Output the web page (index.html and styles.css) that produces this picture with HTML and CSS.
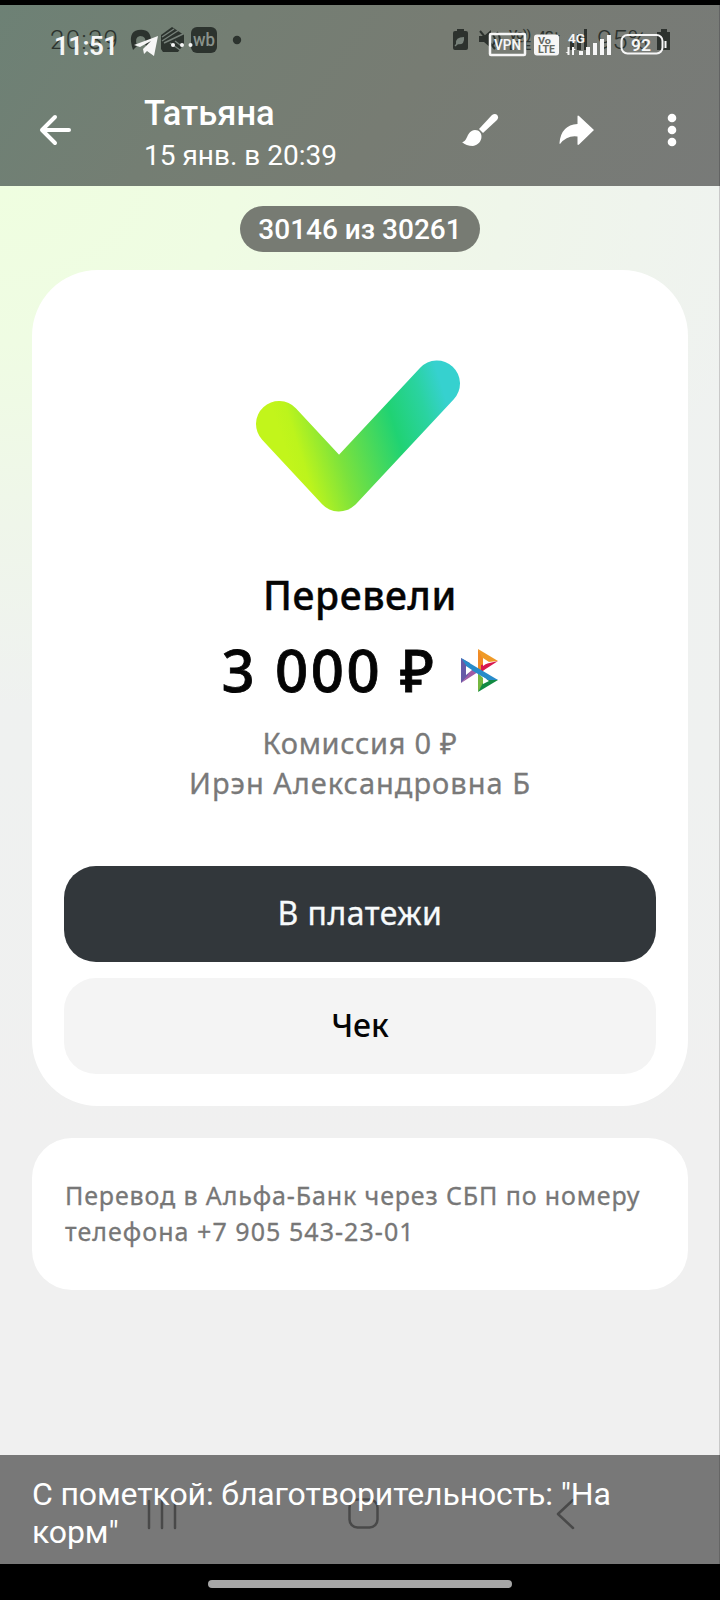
FILE: index.html
```html
<!DOCTYPE html>
<html lang="ru">
<head>
<meta charset="utf-8">
<title>Татьяна</title>
<link rel="stylesheet" href="styles.css">
</head>
<body>
<div class="screen">
  <header class="top">
    <svg class="status" width="720" height="64" viewBox="0 0 720 64">
      <g class="ghost">
        <text class="light" x="50" y="49" font-size="26" textLength="68">20:39</text>
        <path d="M133 50Q127 32 138 30Q151 28 151 41L148 48L145 44Q147 36 140 36Q134 37 137 46Z"/>
        <path d="M161 35L172 27L184 35V44L178 52H163L161 49Z"/>
        <rect x="191" y="27" width="26" height="26" rx="6"/>
        <circle cx="237" cy="40" r="4.200"/>
        <path d="M457 29h7v2h2q2 0 2 2v15q0 2-2 2h-11q-2 0-2-2v-15q0-2 2-2h2z"/>
        <path d="M479 36h5l7-6v18l-7-6h-5z"/>
        <path class="line" d="M480 31l15 18M493 35q4 5 0 10M497 32q6 8 0 16"/>
        <text x="509" y="39" font-size="13" textLength="22">Vo))</text>
        <text x="509" y="50" font-size="12" textLength="22">LTE</text>
        <text x="538" y="40" font-size="13" textLength="22">4G+</text>
        <path d="M570 40h4v10h-4zM577 34h4v16h-4zM584 29h3v21h-3z"/>
        <text class="light" x="597" y="49" font-size="26" textLength="51" lengthAdjust="spacingAndGlyphs">95%</text>
        <path d="M661 29h6v3h3v18h-13v-18h4z"/>
      </g>
      <path class="cut" d="M162 37l12-8M162 41l17-11M164 43l19-9M175 41l9 7M170 43l10 7"/>
      <path class="leaf" d="M456 44q-1-7 8-7q1 9-8 7z"/>
      <path class="cut" d="M455 46l5-5"/>
      <text class="wb" x="193" y="45.500" font-size="19" textLength="22" lengthAdjust="spacingAndGlyphs">wb</text>
      <g class="front">
        <text x="54" y="55" font-size="26" textLength="64">11:51</text>
        <path d="M134 45L158 36L154 56L147 51L144 54L143 49L151 41L140 47Z"/>
        <circle cx="173" cy="45" r="2"/><circle cx="182" cy="45" r="2"/><circle cx="190.500" cy="45" r="2"/>
        <rect class="frame" x="490" y="34" width="35" height="21" rx="1"/>
        <text x="494" y="49.500" font-size="14" textLength="27" lengthAdjust="spacingAndGlyphs">VPN</text>
        <rect x="534" y="34.500" width="25" height="21" rx="3"/>
        <text class="dark" x="538" y="44" font-size="9.500" textLength="13" lengthAdjust="spacingAndGlyphs">Vo</text>
        <text class="dark" x="538" y="53" font-size="10" textLength="17" lengthAdjust="spacingAndGlyphs">LTE</text>
        <text x="568" y="43" font-size="13.500" textLength="17" lengthAdjust="spacingAndGlyphs">4G</text>
        <path d="M567.500 47h2v8h-2zM572 47h2v8h-2zM565.500 52h4v3zM572 47l4 3h-4zM579 51h4v4h-4zM586 47h4v8h-4zM593 43h4v12h-4zM600 39h4v16h-4zM607 35h4v20h-4z"/>
        <rect class="thin" x="621.500" y="35" width="41" height="18.500" rx="6"/>
        <path d="M664.500 41h2v7h-2z"/>
        <text x="631" y="50.500" font-size="16.500" textLength="20" lengthAdjust="spacingAndGlyphs">92</text>
      </g>
    </svg>
    <div class="bar">
      <svg class="back" width="32" height="32" viewBox="0 0 32 32"><path d="M30 16H3M16 3L3 16L16 29"/></svg>
      <div class="who">
        <div class="name"><span>Татьяна</span></div>
        <div class="date"><span>15 янв. в 20:39</span></div>
      </div>
      <svg class="brush" width="38" height="36" viewBox="0 0 38 36"><path d="M1 29C7 29 5 18 14 17C23 17 23 31 12 33Q5 33 1 29Z"/><path d="M18 16L31 2C35-1 39 3 36 7L22 20Z"/></svg>
      <svg class="share" width="36" height="32" viewBox="0 0 36 32"><path d="M18.500 9V1.500Q18.500 0 20 1L35 15L20 29.500Q18.500 30.500 18.500 29V21.500Q8 20 1 29Q.500 29 .500 28Q2 10 18.500 9Z"/></svg>
      <svg class="more" width="10" height="34" viewBox="0 0 10 34"><circle cx="5" cy="5" r="4.300"/><circle cx="5" cy="17" r="4.300"/><circle cx="5" cy="29" r="4.300"/></svg>
    </div>
  </header>
  <main class="photo">
    <div class="counter"><span>30146 из 30261</span></div>
    <section class="card">
      <svg class="check" width="206" height="154" viewBox="0 0 206 154">
        <defs><linearGradient id="tick" gradientUnits="userSpaceOnUse" x1="24" y1="70" x2="185" y2="20">
          <stop offset="0" stop-color="#c2f51b"/><stop offset=".08" stop-color="#bcf41c"/><stop offset=".3" stop-color="#7be23d"/><stop offset=".66" stop-color="#20d273"/><stop offset=".86" stop-color="#2ad3a0"/><stop offset="1" stop-color="#36d1cf"/>
        </linearGradient></defs>
        <path d="M24 64L84 128.500L182 23.500"/>
      </svg>
      <h1 class="title"><span>Перевели</span></h1>
      <div class="sum">
        <span class="amount">3 000 ₽</span>
        <svg class="sbp" width="38" height="43" viewBox="0 0 38 43">
          <path d="M0 9L9 14V25L0 34Z" fill="#675aa7"/>
          <path d="M0 34L17 23L9 18L7 26Z" fill="#a05ca5"/>
          <path d="M17 0L24 11V20L17 26Z" fill="#f18a25"/>
          <path d="M17 0L37 12L27 13L21 9Z" fill="#ef9a27"/>
          <path d="M37 12L20 23V16Z" fill="#d9174e"/>
          <path d="M17 24L22 29V36L17 43Z" fill="#75b740"/>
          <path d="M17 43L37 31L27 29L22 34Z" fill="#118a43"/>
          <path d="M0 9L37 31H27L7 19Z" fill="#278bca"/>
          <path d="M5 17L11 21L5 26ZM22 9L28 13L22 17ZM22 28L28 32L22 35Z" fill="#fff"/>
        </svg>
      </div>
      <div class="fee"><span>Комиссия 0 ₽</span></div>
      <div class="person"><span>Ирэн Александровна Б</span></div>
      <div class="actions">
        <div class="btn dark-btn"><span>В платежи</span></div>
        <div class="btn light-btn"><span>Чек</span></div>
      </div>
    </section>
    <section class="info">
      <div class="info-a"><span>Перевод в Альфа-Банк через СБП по номеру</span></div>
      <div class="info-b"><span>телефона +7 905 543-23-01</span></div>
    </section>
  </main>
  <footer class="caption">
    <svg class="nav" width="720" height="109" viewBox="0 0 720 109"><path d="M149 46V73M162 46V73M175 46V73M573 45L558 59L573 73"/><rect x="349.500" y="44.500" width="28" height="28" rx="8"/></svg>
    <p class="cap-a"><span>С пометкой: благотворительность: "На</span></p>
    <p class="cap-b"><span>корм"</span></p>
  </footer>
  <div class="home"><div class="pill"></div></div>
</div>
</body>
</html>
```
FILE: styles.css
```css
* { box-sizing: border-box; }
body { margin: 0; background: #000; }
p, h1 { margin: 0; }
.screen { width: 720px; height: 1600px; padding-top: 5px; background: #000; display: flex; flex-direction: column; font-family: Roboto, sans-serif; overflow: hidden; }
span { white-space: nowrap; }

.top { position: relative; height: 181px; background: linear-gradient(125deg, #6d8175 0%, #747e73 30%, #777c73 55%, #787a78 100%); border-right: 1px solid #626363; }
.status { position: absolute; left: 0; top: -5px; font-family: Roboto, sans-serif; font-weight: 500; }
.ghost { fill: #252b27; opacity: .9; }
.ghost .light { font-weight: 300; }
.ghost .line { fill: none; stroke: #252b27; stroke-width: 2; }
.cut { fill: none; stroke: #77817a; stroke-width: 1.4; }
.leaf { fill: #77817a; }
.wb { fill: #89928b; font-weight: 500; }
.front { fill: #f6f6f6; }
.front .frame { fill: none; stroke: #f6f6f6; stroke-width: 2.5; }
.front .thin { fill: none; stroke: #f6f6f6; stroke-width: 2; }
.front text { font-weight: 600; }
.front .dark { fill: #646962; font-weight: 700; }
.bar { height: 181px; padding: 88px 42px 0 39px; display: flex; align-items: flex-start; color: #fff; }
.bar svg { flex: none; fill: #fff; }
.bar .back { margin-top: 21px; fill: none; stroke: #fff; stroke-width: 4; stroke-linecap: round; stroke-linejoin: round; }
.who { flex: none; margin-left: 73px; width: 317px; }
.name { font-size: 34.5px; line-height: 40px; font-weight: 500; }
.date { font-size: 28px; line-height: 34px; margin-top: 6px; }
.brush { margin-top: 20px; }
.share { margin: 22px 0 0 60px; }
.more { margin: 20px 0 0 72px; }

.photo { height: 1269px; padding: 20px 31px 0 32px; border-right: 1px solid #c9c9c9; background: radial-gradient(ellipse 780px 520px at 0 0, #effee0 0%, #effce3 30%, #eff6ea 65%, #f0f0f000 100%), linear-gradient(180deg, #eff2f0 0%, #eff1f0 45%, #f0f0f0 75%); }
.counter { width: 240px; height: 46px; margin: 0 auto; border-radius: 23px; background: #777b73; color: #fff; font-size: 28px; font-weight: 500; line-height: 47px; text-align: center; }
.card { height: 836px; margin-top: 18px; padding: 90px 32px 0; border-radius: 66px; background: #fff; font-family: "Noto Sans", sans-serif; text-align: center; display: flex; flex-direction: column; align-items: center; }
.check { flex: none; margin-right: 4px; }
.check path { fill: none; stroke: url(#tick); stroke-width: 46; stroke-linecap: round; stroke-linejoin: round; }
.title { height: 54px; margin-top: 54px; font-size: 39px; line-height: 54px; font-weight: 500; letter-spacing: .6px; color: #050505; -webkit-text-stroke: .4px; }
.sum { height: 80px; margin-top: 8px; display: flex; align-items: center; gap: 24px; }
.amount { font-size: 58px; line-height: 80px; font-weight: 500; letter-spacing: 2.6px; color: #050505; -webkit-text-stroke: .8px; }
.fee, .person { font-size: 29px; line-height: 40px; color: #797979; -webkit-text-stroke: .3px; }
.fee { margin-top: 13px; letter-spacing: .7px; }
.person { letter-spacing: 1px; }
.actions { width: 592px; margin-top: 63px; display: flex; flex-direction: column; gap: 16px; }
.btn { height: 96px; border-radius: 32px; font-size: 32px; line-height: 94px; }
.dark-btn { background: #32373b; color: #f7fafb; letter-spacing: .5px; -webkit-text-stroke: .3px; }
.light-btn { background: #f4f4f4; color: #050505; font-weight: 500; }
.info { height: 152px; margin-top: 32px; padding: 39px 33px; border-radius: 40px; background: #fff; color: #777; font: 25px/36px "Noto Sans", sans-serif; -webkit-text-stroke: .3px; }
.info-a { letter-spacing: .88px; }
.info-b { letter-spacing: 1.05px; }

.caption { position: relative; height: 109px; padding: 20px 32px 0; background: #787878; border-right: 1px solid #656565; color: #fff; font-size: 32px; line-height: 38px; letter-spacing: -.12px; }
.nav { position: absolute; left: 0; top: 0; fill: none; stroke: #494949; stroke-width: 2.5; stroke-linecap: round; stroke-linejoin: round; }
.caption p { position: relative; }
.home { height: 36px; padding-top: 16px; }
.pill { width: 304px; height: 8px; margin: 0 auto; border-radius: 4px; background: #a6a6a6; }
```
